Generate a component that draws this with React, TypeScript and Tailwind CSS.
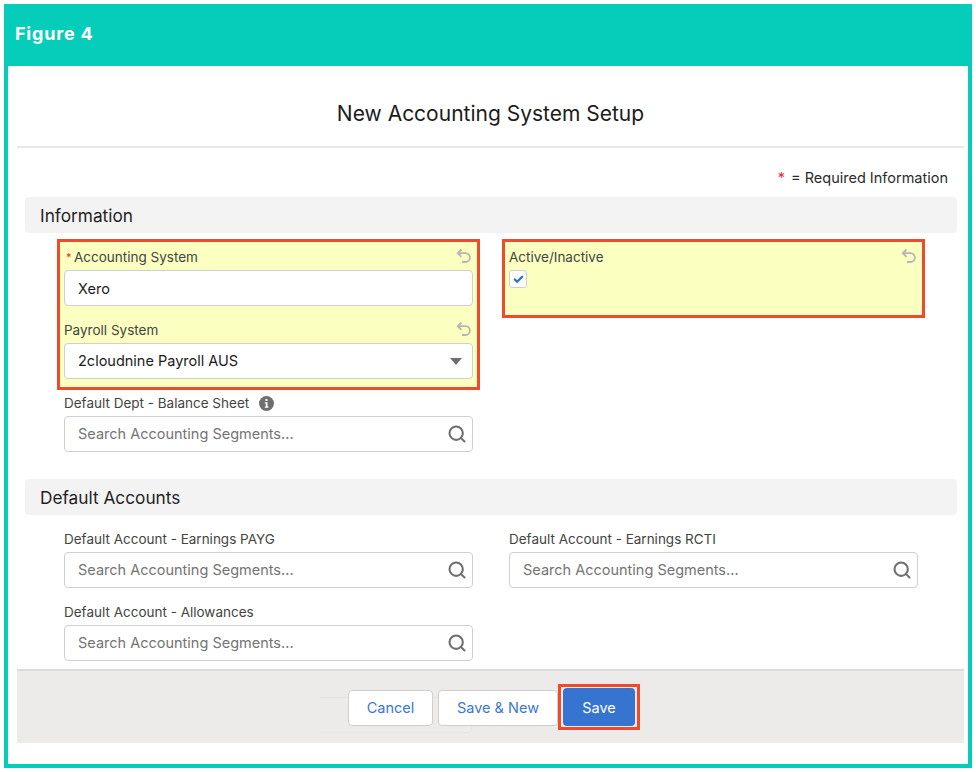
import { Check, Search } from 'lucide-react';

function UndoIcon() {
  return (
    <svg viewBox="0 0 16 16" className="-mt-[2px] h-4 w-4" fill="none" stroke="#b5b5b5" strokeWidth="1.8">
      <path d="M5.5 1.5 1.8 5.2l3.7 3.7" />
      <path d="M2 5.2h7.5a4.4 4.4 0 0 1 0 8.8H6" />
    </svg>
  );
}

function InfoIcon() {
  return (
    <svg viewBox="0 0 15 15" className="h-[15px] w-[15px]">
      <circle cx="7.5" cy="7.5" r="7.5" fill="#6f6f6f" />
      <rect x="6.5" y="3" width="2" height="2" fill="#fff" />
      <path d="M5.8 6.2h2.7v4.4h1v1.2H5.8v-1.2h1V7.4h-1z" fill="#fff" />
    </svg>
  );
}

function Label({ text, required }: { text: string; required?: boolean }) {
  return (
    <div className="flex h-[18px] items-center text-[13.5px] leading-[18px] text-[#444]">
      {required && <span className="mr-[3px] ml-[2px] w-[5px] text-[11px] text-[#e0303a]">*</span>}
      <span>{text}</span>
    </div>
  );
}

function EditableLabel({ text, required }: { text: string; required?: boolean }) {
  return (
    <div className="flex items-center justify-between pr-[1px]">
      <Label text={text} required={required} />
      <UndoIcon />
    </div>
  );
}

function SearchField({ label, info }: { label: string; info?: boolean }) {
  return (
    <div className="w-[409px]">
      <div className="flex items-center gap-[10px]">
        <Label text={label} />
        {info && <InfoIcon />}
      </div>
      <div className="mt-[4px] flex h-[36px] items-center justify-between rounded-[4px] border border-[#cfcfcf] bg-white pr-[5px] pl-[13px]">
        <span className="text-[14.5px] text-[#747474]">Search Accounting Segments...</span>
        <Search className="h-5 w-5 text-[#6f6f6f]" strokeWidth={2.5} />
      </div>
    </div>
  );
}

function SectionBar({ title }: { title: string }) {
  return (
    <div className="mr-[7px] ml-[8px] flex h-[36px] items-center rounded-[4px] bg-[#f3f3f3] pt-[2px] pl-[15px] text-[17.25px] text-[#1f1f1f]">
      {title}
    </div>
  );
}

export default function App() {
  return (
    <div className="h-[772px] w-[976px] bg-white p-[4px] font-['Inter','Liberation_Sans',sans-serif]">
      <div className="flex h-[764px] w-[968px] flex-col border-x-[4px] border-b-[4px] border-[#06cdb9]">
        <div className="-mx-[4px] flex h-[62px] shrink-0 items-center bg-[#06cdb9] pb-[4px] pl-[11px] text-[18px] font-bold tracking-[0.8px] text-white">
          Figure 4
        </div>

        <div className="relative flex-1 pr-[4px] pl-[9px]">
          <div className="flex h-[82px] items-center justify-center border-b-[2px] border-[#e8e8e8] pt-[16px] text-[21px] text-[#1c1c1c]">
            New Accounting System Setup
          </div>

          <div className="flex h-[49px] items-center justify-end pt-[11px] pr-[16px] text-[14.5px] text-[#2b2b2b]">
            <span className="mr-[6px] text-[#e0303a]">*</span>= Required Information
          </div>

          <SectionBar title="Information" />

          <div className="mt-[6px] grid grid-cols-[423px_423px] gap-x-[22px] pl-[40px]">
            <div>
              <div className="h-[151px] border-[3px] border-[#f04a2b] bg-[#fbffbf] px-[4px] pt-[6px]">
                <EditableLabel text="Accounting System" required />
                <div className="mt-[4px] flex h-[36px] items-center rounded-[4px] border border-[#cfcfcf] bg-white pt-[1px] pl-[13px] text-[14.5px] text-[#1c1c1c]">
                  Xero
                </div>
                <div className="mt-[15px]">
                  <EditableLabel text="Payroll System" />
                </div>
                <div className="mt-[4px] flex h-[36px] items-center justify-between rounded-[4px] border border-[#cfcfcf] bg-white pr-[10px] pl-[13px] text-[14.5px] text-[#1c1c1c]">
                  2cloudnine Payroll AUS
                  <span className="h-0 w-0 border-x-[6px] border-t-[7px] border-x-transparent border-t-[#6f6f6f]" />
                </div>
              </div>
              <div className="mt-[4px] pl-[7px]">
                <SearchField label="Default Dept - Balance Sheet" info />
              </div>
            </div>
            <div className="h-[79px] border-[3px] border-[#f04a2b] bg-[#fbffbf] px-[4px] pt-[6px]">
              <EditableLabel text="Active/Inactive" />
              <div className="mt-[4px] flex h-[18px] w-[18px] items-center justify-center rounded-[3px] border border-[#cfcfcf] bg-white">
                <Check className="h-[11px] w-[11px] text-[#2f6fd0]" strokeWidth={5} />
              </div>
            </div>
          </div>

          <div className="mt-[27px]">
            <SectionBar title="Default Accounts" />
          </div>

          <div className="mt-[15px] grid grid-cols-[409px_409px] gap-x-[36px] gap-y-[15px] pl-[47px]">
            <SearchField label="Default Account - Earnings PAYG" />
            <SearchField label="Default Account - Earnings RCTI" />
            <SearchField label="Default Account - Allowances" />
          </div>

          <div className="relative mt-[8px] flex h-[74px] items-start border-t-[2px] border-[#dcdcdc] bg-[#ecebea] pt-[19px] pl-[331px]">
            <div className="absolute top-[26px] left-[303px] h-[36px] w-[152px] rounded-r-[4px] border-y border-r border-[#e6e5e4]" />
            <button className="relative h-[36px] w-[85px] rounded-[4px] border border-[#cfcfcf] bg-white text-[14.5px] text-[#3a78d4]">
              Cancel
            </button>
            <button className="relative ml-[5px] h-[36px] w-[120px] rounded-[4px] border border-[#cfcfcf] bg-white text-[14.5px] text-[#3a78d4]">
              Save &amp; New
            </button>
            <div className="relative -mt-[6px] flex h-[46px] w-[82px] items-center justify-center border-[3px] border-[#f04a2b] bg-[#ecebea]">
              <button className="h-[38px] w-[72px] rounded-[4px] bg-[#3574cf] pt-[1px] text-[14.5px] text-white">
                Save
              </button>
            </div>
          </div>
        </div>
      </div>
    </div>
  );
}
